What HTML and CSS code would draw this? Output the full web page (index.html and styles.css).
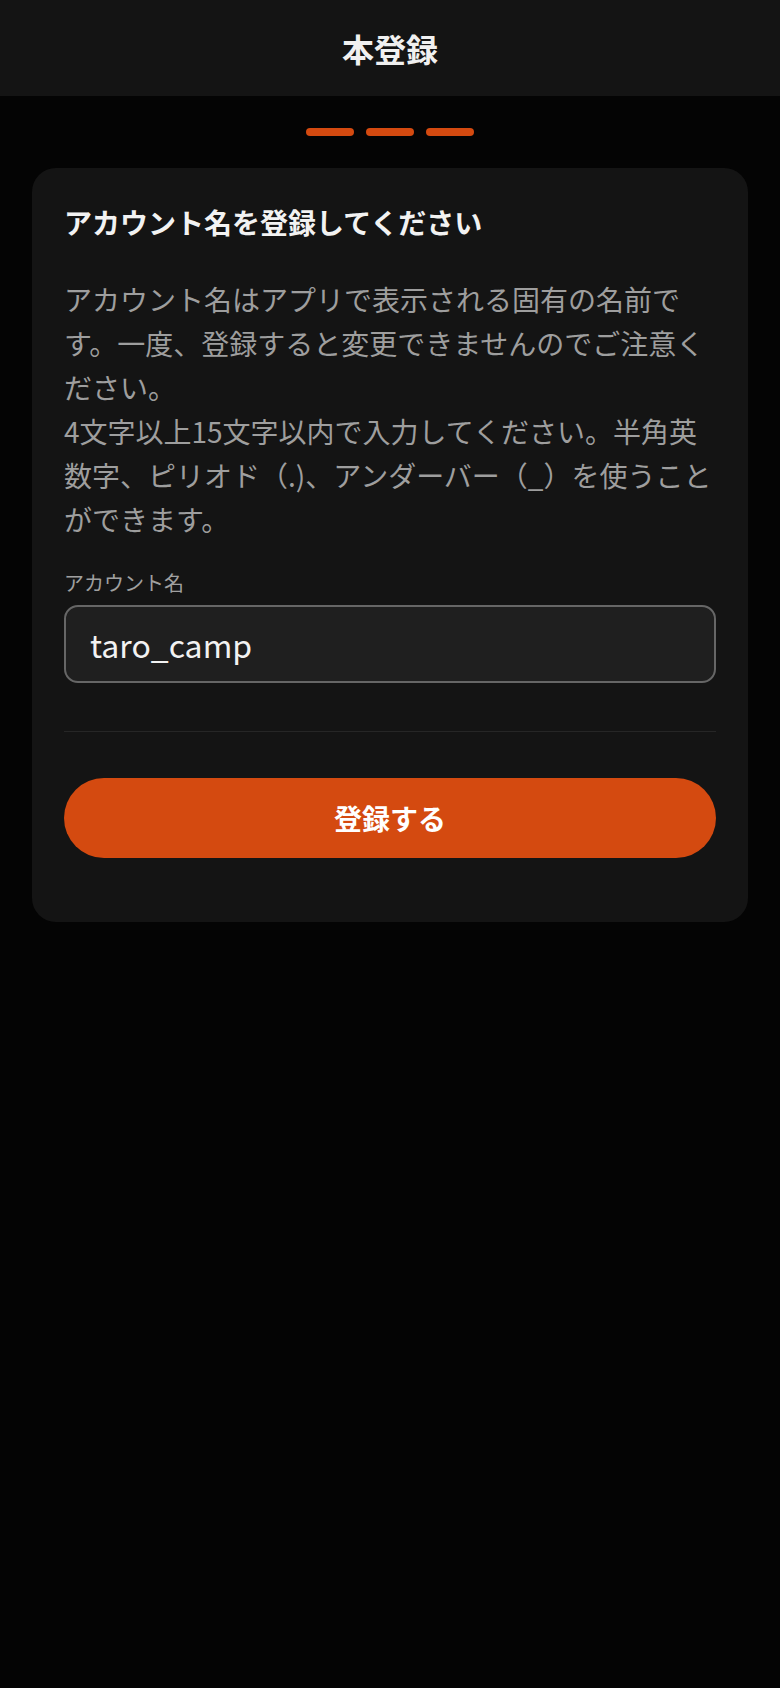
FILE: index.html
```html
<!DOCTYPE html>
<html lang="ja">
<head>
    <meta charset="UTF-8">
    <meta name="viewport" content="width=device-width, initial-scale=1.0">
    <title>本登録</title>
    <link rel="stylesheet" href="styles.css">
</head>
<body>
    <header class="top-bar">
        <h1 class="top-title">本登録</h1>
    </header>
    <main>
        <div class="steps">
            <span class="step"></span>
            <span class="step"></span>
            <span class="step"></span>
        </div>
        <section class="card">
            <h2 class="card-title">アカウント名を登録してください</h2>
            <p class="card-text">アカウント名はアプリで表示される固有の名前です。一度、登録すると変更できませんのでご注意ください。<br>4文字以上15文字以内で入力してください。半角英数字、ピリオド（.)、アンダーバー（_）を使うことができます。</p>
            <label class="field-label" for="account">アカウント名</label>
            <input class="field-input" id="account" type="text" value="taro_camp">
            <hr class="divider">
            <button class="btn-submit">登録する</button>
        </section>
    </main>
</body>
</html>
```

FILE: styles.css
```css
html, body {margin: 0; padding: 0; background-color: #040404; min-height: 100%;}
body {font-family: "Noto Sans CJK JP", "Noto Sans", sans-serif; color: #f0f0f0;}

.top-bar {height: 96px; background-color: #141414; display: flex; align-items: center; justify-content: center;}
.top-title {margin: 0; font-size: 32px; font-weight: bold; line-height: 1; color: #f0f0f0;}

.steps {display: flex; justify-content: center; gap: 12px; padding: 32px 0;}
.step {width: 48px; height: 8px; border-radius: 4px; background-color: #d44a10;}

.card {margin: 0 32px; padding: 32px 32px 64px; background-color: #141414; border-radius: 24px;
    display: flex; flex-direction: column;}
.card-title {margin: 0; font-size: 28px; line-height: 1.6; font-weight: bold; color: #f2f2f2;}
.card-text {margin: 32px 0 0; font-size: 28px; line-height: 44px; color: #9e9e9e;}

.field-label {margin-top: 28px; font-size: 20px; line-height: 28px; color: #a0a0a0;}
.field-input {margin-top: 8px; height: 78px; box-sizing: border-box; padding: 0 24px;
    border: 2px solid #666; border-radius: 14px; background-color: #1f1f1f;
    font-family: inherit; font-size: 32px; color: #f2f2f2; outline: none;}

.divider {margin: 48px 0 46px; border: none; height: 1px; background-color: #262626;}

.btn-submit {height: 80px; border: none; border-radius: 40px; background-color: #d44a10;
    font-family: inherit; font-size: 28px; font-weight: bold; color: #fff;}
```
